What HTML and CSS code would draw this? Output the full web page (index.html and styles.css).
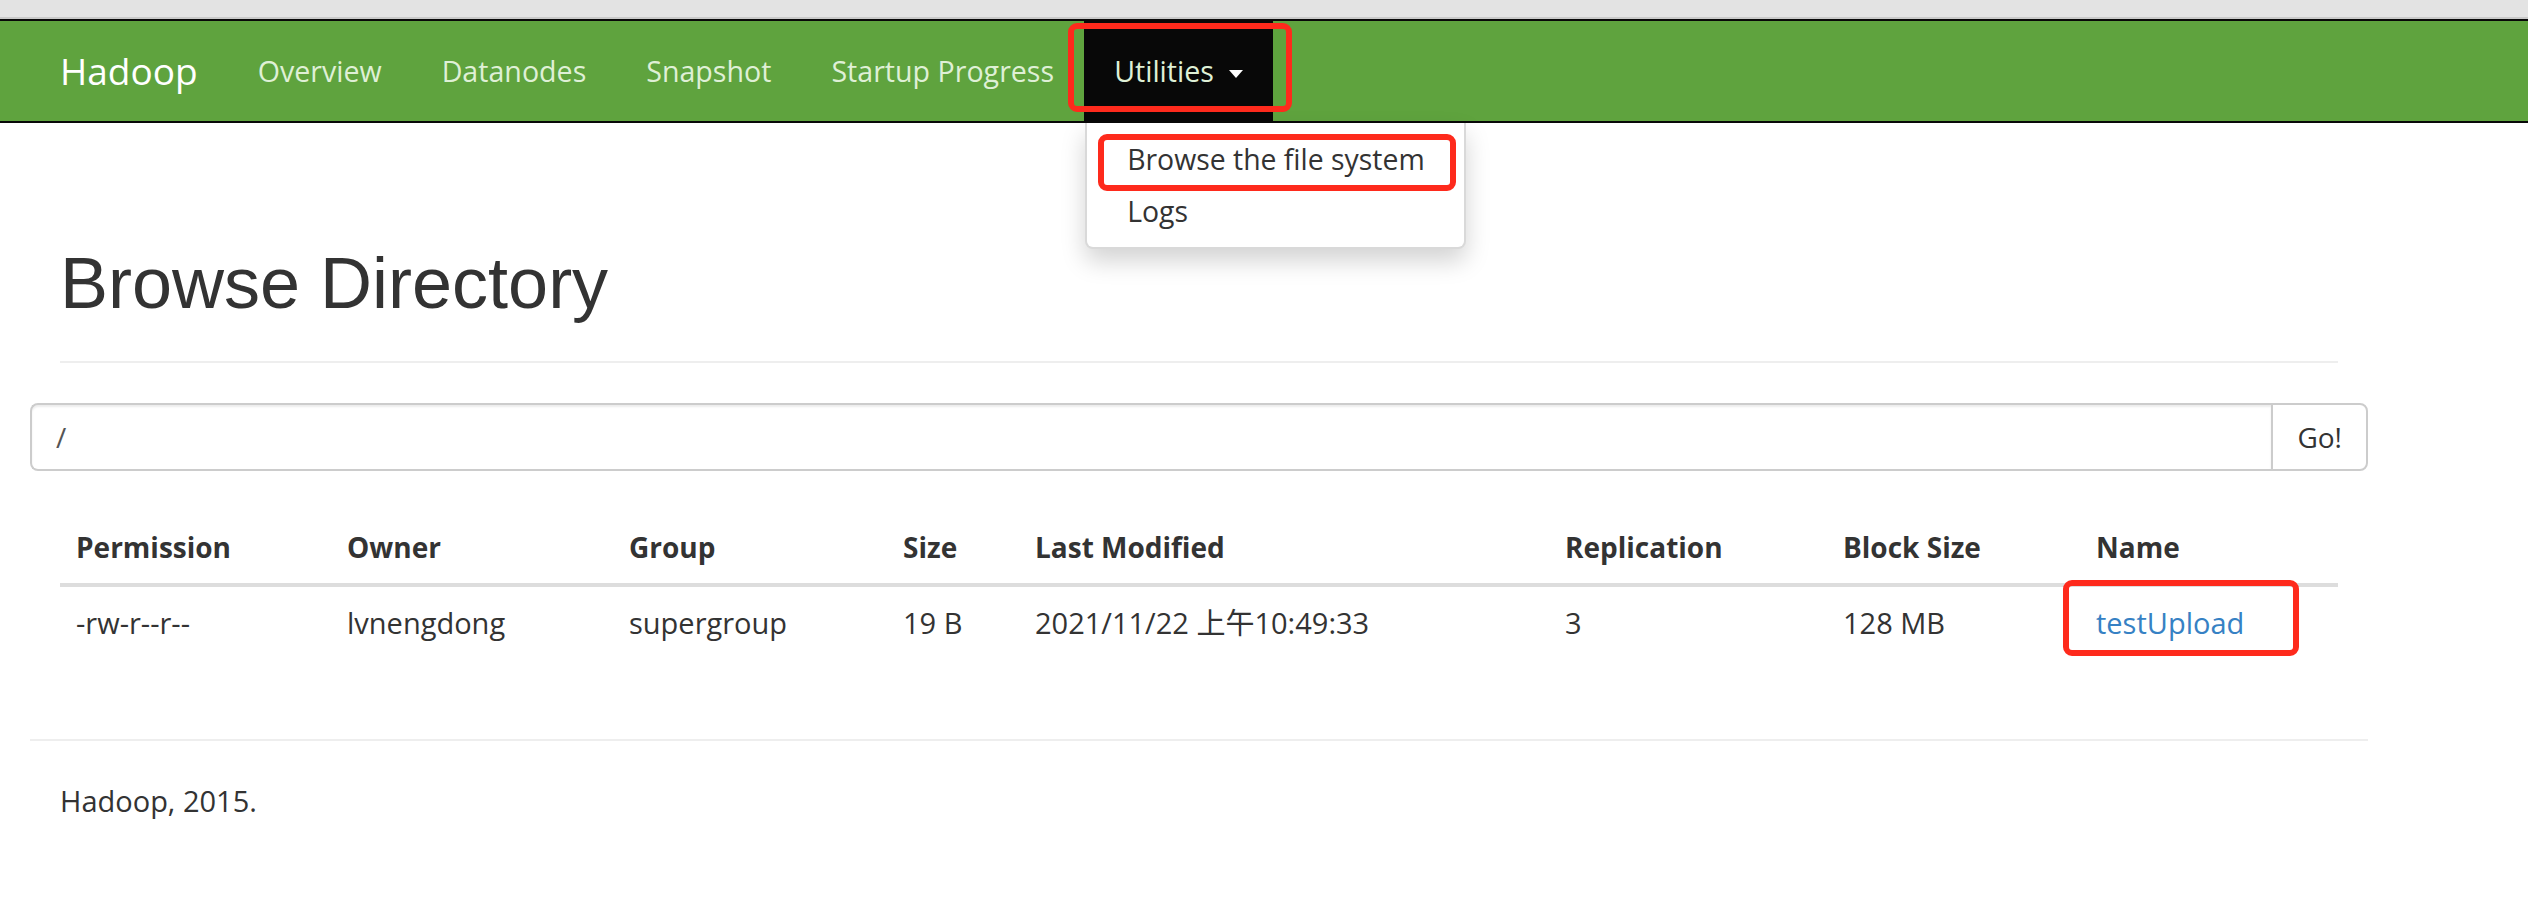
FILE: index.html
```html
<!DOCTYPE html>
<html lang="en">
<head>
<meta charset="utf-8">
<title>Browsing HDFS</title>
<link rel="stylesheet" href="styles.css">
</head>
<body>
<div class="chrome"></div>
<nav class="navbar">
  <div class="nav-inner">
    <a class="brand" href="#">Hadoop</a>
    <ul class="nav">
      <li><a href="#">Overview</a></li>
      <li><a href="#">Datanodes</a></li>
      <li><a href="#">Snapshot</a></li>
      <li><a href="#">Startup Progress</a></li>
      <li class="dropdown">
        <a href="#">Utilities <span class="caret"></span></a>
        <ul class="dropdown-menu">
          <li class="menu-item"><a href="#">Browse the file system</a><span class="mark mark-browse"></span></li>
          <li class="menu-item"><a href="#">Logs</a></li>
        </ul>
        <span class="mark mark-utilities"></span>
      </li>
    </ul>
  </div>
</nav>

<div class="container">
  <div class="page-header">
    <h1>Browse Directory</h1>
  </div>

  <div class="input-group">
    <input class="form-control" type="text" value="/">
    <button class="btn" type="button">Go!</button>
  </div>

  <table class="table">
    <colgroup>
      <col class="c-perm"><col class="c-owner"><col class="c-group"><col class="c-size"><col class="c-mod"><col class="c-rep"><col class="c-block"><col class="c-name">
    </colgroup>
    <thead>
      <tr>
        <th>Permission</th>
        <th>Owner</th>
        <th>Group</th>
        <th>Size</th>
        <th>Last Modified</th>
        <th>Replication</th>
        <th>Block Size</th>
        <th>Name</th>
      </tr>
    </thead>
    <tbody>
      <tr>
        <td>-rw-r--r--</td>
        <td>lvnengdong</td>
        <td>supergroup</td>
        <td>19 B</td>
        <td>2021/11/22 上午10:49:33</td>
        <td>3</td>
        <td>128 MB</td>
        <td class="name-cell"><a href="#">testUpload</a><span class="mark mark-name"></span></td>
      </tr>
    </tbody>
  </table>

  <hr class="footer-rule">
  <p class="footer">Hadoop, 2015.</p>
</div>
</body>
</html>
```

FILE: styles.css
```css
* {
  box-sizing: border-box;
}

html, body {
  margin: 0;
  padding: 0;
  background: #fff;
}

body {
  font-family: "Open Sans", "Noto Sans", "Noto Sans CJK SC", sans-serif;
  font-size: 29px;
  line-height: 40px;
  color: #333;
}

a {
  text-decoration: none;
}

.chrome {
  height: 19px;
  background: #e3e3e3;
  border-bottom: 2px solid #c9c9c9;
}

/* ---------- navbar ---------- */
.navbar {
  background: #5fa33e;
  border-top: 2px solid #080808;
  border-bottom: 2px solid #080808;
}

.nav-inner {
  display: flex;
  align-items: stretch;
  height: 100px;
  padding-left: 30px;
}

.brand {
  display: block;
  padding: 30px 30px;
  font-size: 37px;
  line-height: 40px;
  color: #fff;
}

.nav {
  display: flex;
  list-style: none;
  margin: 0;
  padding: 0;
}

.nav > li {
  position: relative;
}

.nav > li > a {
  display: block;
  padding: 30px 30px;
  font-size: 28.6px;
  line-height: 40px;
  color: #dff0d6;
  white-space: nowrap;
}

.dropdown {
  background: #080808;
}

.dropdown > a {
  color: #e6efcf;
}

.caret {
  display: inline-block;
  width: 0;
  height: 0;
  margin-left: 8px;
  vertical-align: middle;
  border-top: 8px solid #fff;
  border-left: 7px solid transparent;
  border-right: 7px solid transparent;
}

.dropdown-menu {
  position: absolute;
  top: calc(100% + 2px);
  left: 1px;
  z-index: 10;
  width: 381px;
  margin: 0;
  padding: 10px 0;
  list-style: none;
  background: #fff;
  border: 2px solid rgba(0, 0, 0, 0.15);
  border-top: 0;
  border-radius: 0 0 8px 8px;
  box-shadow: 0 12px 24px rgba(0, 0, 0, 0.175);
}

.menu-item {
  position: relative;
}

.menu-item a {
  display: block;
  padding: 6px 40px;
  font-size: 28.4px;
  line-height: 40px;
  color: #333;
  white-space: nowrap;
}

/* red annotation boxes */
.mark {
  position: absolute;
  border: 6px solid #fe2a1c;
  border-radius: 9px;
  pointer-events: none;
}

.mark-utilities {
  left: -16px;
  top: 2px;
  width: 224px;
  height: 89px;
}

.mark-browse {
  left: 11px;
  top: 1px;
  width: 358px;
  height: 57px;
}

.mark-name {
  left: -17px;
  top: -7px;
  width: 236px;
  height: 76px;
}

/* ---------- content ---------- */
.container {
  width: 2338px;
  margin-left: 30px;
  padding: 0 30px;
}

.page-header {
  margin-top: 121px;
  padding-bottom: 18px;
  border-bottom: 2px solid #eee;
}

.page-header h1 {
  margin: 0 0 20px;
  font-family: "Liberation Sans", Arial, sans-serif;
  font-size: 72px;
  font-weight: 500;
  line-height: 79.2px;
  color: #333;
}

.input-group {
  display: flex;
  margin: 40px -30px 0;
  height: 68px;
}

.form-control {
  flex: 1;
  height: 68px;
  padding: 12px 24px;
  font-family: inherit;
  font-size: 28px;
  color: #555;
  border: 2px solid #ccc;
  border-right: 0;
  border-radius: 8px 0 0 8px;
  box-shadow: inset 0 2px 2px rgba(0, 0, 0, 0.075);
  outline: none;
}

.btn {
  height: 68px;
  padding: 12px 24px;
  font-family: inherit;
  font-size: 28px;
  line-height: 40px;
  color: #333;
  background: #fff;
  border: 2px solid #ccc;
  border-radius: 0 8px 8px 0;
}

.table {
  width: 100%;
  margin-top: 40px;
  margin-bottom: 0;
  border-collapse: collapse;
  border-spacing: 0;
  table-layout: fixed;
}

.c-perm { width: 271px; }
.c-owner { width: 282px; }
.c-group { width: 274px; }
.c-size { width: 132px; }
.c-mod { width: 530px; }
.c-rep { width: 278px; }
.c-block { width: 253px; }
.c-name { width: 258px; }

.table th,
.table td {
  padding: 16px;
  line-height: 40px;
  text-align: left;
  white-space: nowrap;
}

.table th {
  font-size: 28px;
  font-weight: 700;
  vertical-align: bottom;
  border-bottom: 4px solid #ddd;
}

.table td {
  vertical-align: top;
}

.name-cell {
  position: relative;
}

.name-cell a {
  color: #3681c4;
}

.footer-rule {
  margin: 80px -30px 40px;
  border: 0;
  border-top: 2px solid #eee;
  height: 0;
}

.footer {
  margin: 0;
}
```
